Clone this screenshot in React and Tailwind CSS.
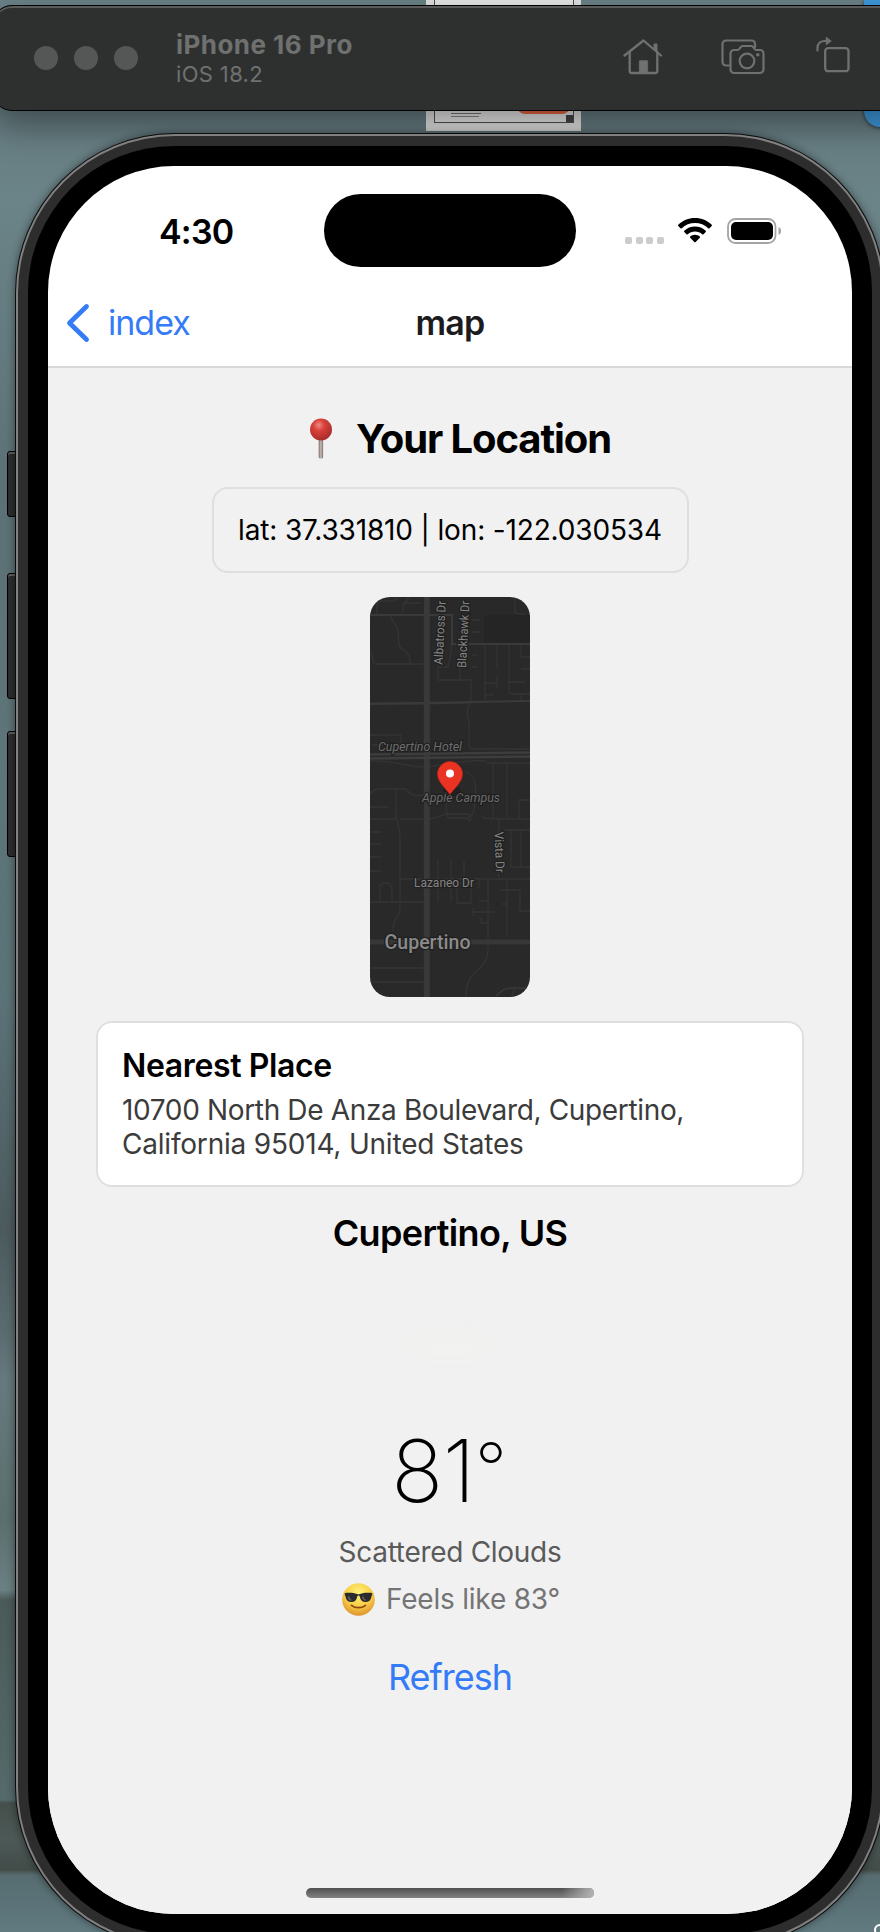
import React from "react";

const HomeIcon = () => (
  <svg width="40" height="38" viewBox="0 0 40 38" fill="none" stroke="#6f7170" strokeWidth="2.3" strokeLinecap="round" strokeLinejoin="round">
    <path d="M1.5 17.5 20.5 2.5 38 17.5" />
    <path d="M6.7 14v19a2 2 0 0 0 2 2h23.6a2 2 0 0 0 2-2V14" />
    <path d="M31 11.500V6h3v8z" fill="#6f7170" strokeWidth="1" />
    <path d="M16.200 35V23.500a1 1 0 0 1 1-1h6.600a1 1 0 0 1 1 1V35z" fill="#6f7170" strokeWidth="0.500" />
  </svg>
);

const CameraIcon = () => (
  <svg width="44" height="36" viewBox="0 0 44 36" fill="none" stroke="#6f7170" strokeWidth="2.200" strokeLinecap="round" strokeLinejoin="round">
    <path d="M8 26.500H5a3.500 3.500 0 0 1-3.500-3.500V5A3.500 3.500 0 0 1 5 1.500h26A3.500 3.500 0 0 1 34 5v3" />
    <path d="M13 11h3.500c1 0 1.600-.5 2.200-1.500l.8-1.200c.6-.9 1.300-1.300 2.300-1.300h8.400c1 0 1.700.4 2.300 1.300l.8 1.200c.6 1 1.200 1.500 2.200 1.500H39a3.500 3.500 0 0 1 3.500 3.500V30.500A3.500 3.500 0 0 1 39 34H13a3.500 3.500 0 0 1-3.500-3.500V14.500A3.500 3.500 0 0 1 13 11z" />
    <circle cx="26" cy="22" r="7.300" />
    <circle cx="36.800" cy="15.700" r="1.800" fill="#6f7170" stroke="none" />
  </svg>
);

const RotateIcon = () => (
  <svg width="34" height="37" viewBox="0 0 34 37" fill="none" stroke="#6f7170" strokeWidth="2.200" strokeLinecap="round">
    <path d="M1.500 14.500V12C1.500 7.500 4.500 5 9 5h2" />
    <path d="M9.800 0.500v9l6-4.500z" fill="#6f7170" stroke="none" />
    <rect x="9.200" y="12.200" width="23.300" height="23" rx="3" strokeWidth="2.300" />
  </svg>
);

const WifiIcon = () => (
  <svg width="34" height="25" viewBox="0 0 34 25">
    <path d="M17 0C10.500 0 4.500 2.500.3 6.700c-.4.4-.4.900 0 1.300l2.200 2.200c.4.4.9.4 1.300 0C7.200 6.800 11.900 4.900 17 4.900s9.800 1.900 13.200 5.300c.4.4.9.4 1.300 0l2.200-2.200c.4-.4.4-.9 0-1.300C29.500 2.500 23.500 0 17 0z" />
    <path d="M17 8.500c-4.100 0-7.900 1.600-10.700 4.200-.4.4-.4.900 0 1.300l2.200 2.200c.4.400.9.400 1.300 0 1.900-1.800 4.400-2.800 7.200-2.800s5.300 1 7.200 2.800c.4.400.9.400 1.300 0l2.200-2.200c.4-.4.4-.9 0-1.300C24.900 10.100 21.100 8.500 17 8.500z" />
    <path d="M17 16.700c-1.900 0-3.600.7-4.800 1.800-.4.400-.4.900 0 1.300l4.100 4.100c.4.400 1 .4 1.400 0l4.100-4.100c.4-.4.4-.9 0-1.300-1.200-1.100-2.900-1.800-4.800-1.800z" />
  </svg>
);

const BatteryIcon = () => (
  <svg width="55" height="26" viewBox="0 0 55 26">
    <rect x="1" y="1" width="47.500" height="24" rx="7.500" fill="none" stroke="#a3a3a3" strokeWidth="1.800" />
    <rect x="4" y="4" width="42" height="18" rx="5" />
    <path d="M51.500 9v8c1.600-.7 2.600-2.200 2.600-4s-1-3.300-2.600-4z" fill="#a3a3a3" />
  </svg>
);

const PushPin = () => (
  <svg width="24" height="42" viewBox="0 0 24 42">
    <defs>
      <radialGradient id="pinHead" cx="0.4" cy="0.3" r="0.75">
        <stop offset="0" stopColor="#ef8a83" />
        <stop offset="0.350" stopColor="#d8403b" />
        <stop offset="1" stopColor="#a32a27" />
      </radialGradient>
      <linearGradient id="pinShaft" x1="0" x2="1" y1="0" y2="0">
        <stop offset="0" stopColor="#7b6a64" />
        <stop offset="0.5" stopColor="#c9beb9" />
        <stop offset="1" stopColor="#7b6a64" />
      </linearGradient>
    </defs>
    <rect x="9.700" y="20" width="4.400" height="20.500" rx="1.500" fill="url(#pinShaft)" />
    <circle cx="12" cy="11.500" r="11" fill="url(#pinHead)" />
  </svg>
);

const CoolFace = () => (
  <svg width="33" height="33" viewBox="0 0 33 33">
    <defs>
      <radialGradient id="face" cx="0.5" cy="0.3" r="0.72">
        <stop offset="0" stopColor="#fff27a" />
        <stop offset="0.550" stopColor="#f9cf49" />
        <stop offset="1" stopColor="#dd8f2e" />
      </radialGradient>
    </defs>
    <circle cx="16.500" cy="16.500" r="16.300" fill="url(#face)" />
    <path d="M2.800 10c4-.6 9-.4 12.200.9.900.3 2.100.3 3 0 3.200-1.300 8.200-1.500 12.200-.9v2.200c-.6.300-.7.900-.8 1.600-.5 3.500-2.500 5.300-5.900 5.300-3.300 0-5-1.800-5.700-5.300-.2-1-.6-1.400-1.300-1.400s-1.100.4-1.300 1.400c-.7 3.500-2.400 5.300-5.700 5.300-3.400 0-5.400-1.800-5.900-5.300-.1-.7-.2-1.300-.8-1.600z" fill="#2b2b2d" />
    <path d="M6.500 13.500c.3 2 1.200 3.300 2.800 3.800M20.800 13.500c.3 2 1.200 3.300 2.800 3.800" stroke="#68686c" strokeWidth="1.500" fill="none" />
    <path d="M9.500 22.300c3.800 3.200 10.200 3.200 14 0" fill="none" stroke="#8a4a13" strokeWidth="1.700" strokeLinecap="round" />
  </svg>
);

const mapLabel = { fontFamily: "Roboto, 'Liberation Sans', sans-serif", paintOrder: "stroke" };

const DarkMap = () => (
  <svg className="h-[400px] w-[160px] rounded-[20px]" viewBox="0 0 160 400">
    <rect width="160" height="400" fill="#292929" />
    <rect x="114" y="18" width="46" height="28" fill="#252525" />
    <g fill="none" stroke="#343434" strokeWidth="1.300">
      <path d="M21 19c0 6 6 8 7 15s-1 15 4 18 8 5 8 15M0 55c4 3 1 12 6 12h48M7 17V8c0-3 2-4 5-4h12l4-4M33 16V8l6-8M34 6h17" />
      <path d="M68 71v12h33v22c-4 6-5 12-2 20v22c0 3 1 5 4 5h57M81 48c2 6-2 14-3 22H68M90 48v34M115 48v56M127 48v24M139 48v46c0 3 2 3 5 3h16M151 48v12h9M151 72h9M139 85h16M115 86h12M127 78v14M115 98h7v-2M151 97v8M102 23h8M102 35h8M102 58h5M102 70h5M145 0v14c0 3 3 3 10 3" />
      <path d="M0 144v-6h31v10H2M0 164c20-2 40 7 56 6s35-8 60-6M0 197c4-6 8-5 20-5h16c5 6 8 8 18 6M26 192v24c0 12 4 10 4 24v57M95 174c12 6 11 14 10 30-1 8 0 14-8 17H78c-4-12 0-20 0-25M97 222c3 3 4 1 4-2M123 166v55M137 166v55M117 166h43M149 221v-18h11" />
      <path d="M0 210h18M0 222h26M30 222h28c10 0 12-5 20-5h22M111 218c2 4 3 4 49 4M0 235h11M0 247h11M0 260h11M0 274h11M30 282h130M129 222v58M134 233h26M141 233v37h19M151 233v37M10 305v-14c0-3 1-5 5-5s7 2 7 5v14M0 305h54M30 297v15c0 10-7 6-7 22M68 263v42M81 263v42M94 263v20M87 286v20h14v-20zM109 283v8M118 283v72c-2 20-22 16-22 45M109 304h8M103 315h22M103 311v8M137 283v56M130 293h20v21h10M137 307h-5M111 320v6h7" />
      <path d="M0 371h54M0 385h54M142 399l3-10" />
    </g>
    <g fill="none" stroke="#3a3a3a" strokeWidth="2">
      <path d="M0 18h82v29h78M0 107l100-2 60-1" />
      <path d="M0 106.500h54l46-1" />
      <path d="M126 399c6-6 10-8 14-8h20" strokeWidth="1.500" />
    </g>
    <path d="M56.800 0v400" stroke="#393939" strokeWidth="6" />
    <path d="M0 345h160" stroke="#373737" strokeWidth="5" />
    <g stroke="#3d3d3d" strokeWidth="2.500">
      <path d="M0 157.500 160 155.500" />
      <path d="M0 161.500 160 159.500" />
    </g>
    <g style={mapLabel} fill="#858585" stroke="#202020" strokeWidth="2.500" fontSize="12.500">
      <text transform="translate(72.500 68) rotate(-87)" textLength="64" lengthAdjust="spacingAndGlyphs">Albatross Dr</text>
      <text transform="translate(96 71) rotate(-87)" textLength="67" lengthAdjust="spacingAndGlyphs">Blackhawk Dr</text>
      <text transform="translate(124.500 235) rotate(88)" textLength="41" lengthAdjust="spacingAndGlyphs">Vista Dr</text>
      <text x="44" y="290" textLength="60" lengthAdjust="spacingAndGlyphs">Lazaneo Dr</text>
      <text x="8" y="154" textLength="84" fontStyle="italic" fill="#6c6c6c" fontSize="13" lengthAdjust="spacingAndGlyphs">Cupertino Hotel</text>
      <text x="52" y="205" textLength="78" fontStyle="italic" fill="#6c6c6c" fontSize="13" lengthAdjust="spacingAndGlyphs">Apple Campus</text>
      <text x="14.500" y="352" textLength="86" fill="#8a8a8a" fontSize="20" fontWeight="500" lengthAdjust="spacingAndGlyphs">Cupertino</text>
    </g>
    <ellipse cx="82" cy="194" rx="9" ry="5" fill="#1c1c1c" opacity="0.6" />
    <path d="M80 197.500C75.500 191 67.500 185 67.500 177a12.500 12.500 0 0 1 25 0c0 8-8 14-12.500 20.500z" fill="#ea3323" stroke="#c92316" strokeWidth="0.600" />
    <circle cx="80" cy="176.500" r="4" fill="#fff" />
  </svg>
);

const Toolbar = () => (
  <header className="relative -ml-2 mt-[5px] flex h-[106px] w-[920px] shrink-0 items-center rounded-l-[20px] border border-black bg-[#2e302f] shadow-[inset_0_2px_0_#5a5c5b,0_14px_36px_rgba(0,0,0,0.4)]">
    <div className="ml-[41px] flex gap-4">
      <span className="size-6 rounded-full bg-[#555756]" />
      <span className="size-6 rounded-full bg-[#555756]" />
      <span className="size-6 rounded-full bg-[#555756]" />
    </div>
    <div className="ml-[38px] w-[447px] text-[#6f7170]">
      <div className="text-[26px] leading-[31px] font-bold tracking-[0.46px]">iPhone 16 Pro</div>
      <div className="text-[22px] leading-[28px] tracking-[0.35px]">iOS 18.2</div>
    </div>
    <div className="flex items-center pb-0.5">
      <HomeIcon />
      <div className="ml-[58px]"><CameraIcon /></div>
      <div className="-mt-1.5 ml-[51px]"><RotateIcon /></div>
    </div>
  </header>
);

const StatusBar = () => (
  <div className="flex h-[117px] items-start pt-[28px]">
    <div className="mt-[17px] ml-[111px] w-[165px] text-[34px] leading-[42px] font-semibold tracking-[-0.8px]">4:30</div>
    <div className="h-[73px] w-[252px] shrink-0 rounded-full bg-black" />
    <div className="mt-6 ml-[49px] flex items-start">
      <div className="mt-[19px] flex gap-[3.7px]">
        <span className="size-[7px] rounded-[2px] bg-[#cccccc]" />
        <span className="size-[7px] rounded-[2px] bg-[#cccccc]" />
        <span className="size-[7px] rounded-[2px] bg-[#cccccc]" />
        <span className="size-[7px] rounded-[2px] bg-[#cccccc]" />
      </div>
      <div className="ml-[14px]"><WifiIcon /></div>
      <div className="ml-[15px]"><BatteryIcon /></div>
    </div>
  </div>
);

const NavBar = () => (
  <div className="grid h-[85px] grid-cols-3 items-center border-b-2 border-[#d8d8d8] pb-1 text-[34px] leading-[42px]">
    <div className="flex items-center text-[#347cf7]">
      <svg className="ml-[18px]" width="24" height="40" viewBox="0 0 24 40" fill="none" stroke="currentColor" strokeWidth="4.800" strokeLinecap="round" strokeLinejoin="round">
        <path d="M20.500 3.500 3.500 20l17 16.500" />
      </svg>
      <span className="ml-[18px] tracking-[-1px]">index</span>
    </div>
    <div className="text-center font-semibold tracking-[-0.8px] text-[#1c1c1e]">map</div>
  </div>
);

const Content = () => (
  <main className="flex flex-1 flex-col items-center bg-[#f1f1f1] pt-[47px]">
    <h1 className="flex items-center pl-5 text-[40px] leading-[48px] font-bold">
      <PushPin />
      <span className="ml-[23px] tracking-[-1.1px]">Your Location</span>
    </h1>
    <div className="mt-6 flex h-[86px] w-[477px] items-center justify-center rounded-2xl border-2 border-[#dfdfdf] text-[28px] tracking-[-0.15px] whitespace-nowrap">
      lat: 37.331810 | lon: -122.030534
    </div>
    <div className="mt-6"><DarkMap /></div>
    <section className="mt-6 h-[166px] w-[708px] rounded-2xl border-2 border-[#dfdfdf] bg-white px-6 pt-6">
      <h2 className="text-[32px] leading-[38px] font-semibold tracking-[-0.38px]">Nearest Place</h2>
      <p className="mt-[8px] w-[600px] text-[28px] leading-[34px] text-[#3b3b3b]">
        <span className="tracking-[-0.35px]">10700 North De Anza Boulevard, Cupertino,</span>
        <br />
        <span className="tracking-[-0.2px]">California 95014, United States</span>
      </p>
    </section>
    <h2 className="mt-6 text-[36px] leading-[44px] font-semibold tracking-[-0.66px]">Cupertino, US</h2>
    <div className="mt-[45px] flex h-[90px] items-center">
      <span className="h-6 w-20 rounded-full bg-[#f1f1ef] blur-[6px]" />
    </div>
    <div className="mt-[31px] mr-0.5 flex text-[86px] leading-[100px] font-extralight">
      <span className="tracking-[-0.5px]">81</span>
      <span className="mt-[2px] text-[70px] leading-[90px]">°</span>
    </div>
    <div className="mt-[14px] text-[28px] leading-[34px] tracking-[-0.3px] text-[#5a5a5a]">Scattered Clouds</div>
    <div className="mt-[13px] flex items-center pl-0.5 text-[28px] leading-[34px] text-[#747474]">
      <CoolFace />
      <span className="ml-[11px] tracking-[-0.2px]">Feels like 83°</span>
    </div>
    <button className="mt-[39px] text-[36px] leading-[44px] tracking-[-1px] text-[#347cf7]">Refresh</button>
    <div className="mt-auto mb-4 h-[10px] w-[288px] overflow-hidden rounded-full bg-linear-to-b from-[#4f504f] to-[#828282]">
      <div className="ml-auto h-full w-8 bg-linear-to-r from-transparent to-[#b4b4b4]" />
    </div>
  </main>
);

const Phone = () => (
  <div className="relative mt-[22px] ml-[15px] h-[1814px] w-[870px] shrink-0">
    <span className="absolute top-[318px] -left-2 h-[66px] w-3 rounded-l-[3px] border border-black bg-[#2d2d2d] shadow-[inset_0_2px_0_#5f5f5f]" />
    <span className="absolute top-[440px] -left-2 h-[126px] w-3 rounded-l-[3px] border border-black bg-[#2d2d2d] shadow-[inset_0_2px_0_#5f5f5f]" />
    <span className="absolute top-[598px] -left-2 h-[126px] w-3 rounded-l-[3px] border border-black bg-[#2d2d2d] shadow-[inset_0_2px_0_#5f5f5f]" />
    <div className="relative h-full rounded-[160px] bg-[#0b0b0b] p-px shadow-[0_0_8px_rgba(0,0,0,0.45)]">
      <div className="h-full rounded-[159px] bg-[#808080] p-[2px]">
        <div className="h-full rounded-[157px] bg-[#2d2d2d] p-[10px]">
          <div className="h-full rounded-[146px] bg-black p-5">
            <div className="flex h-[1748px] flex-col overflow-hidden rounded-[126px] bg-white text-black">
              <StatusBar />
              <NavBar />
              <Content />
            </div>
          </div>
        </div>
      </div>
    </div>
  </div>
);

const Desktop = () => (
  <div className="absolute inset-0 bg-[linear-gradient(180deg,#6b8489_0px,#64797e_80px,#6b8488_200px,#5c7175_480px,#5d7478_760px,#5b7277_1000px,#4c5a5d_1230px,#5a6b6f_1330px,#66797d_1380px,#5b6f6e_1520px,#6b8083_1590px,#4b5a59_1600px,#556a6b_1800px,#454f4b_1803px,#4c5957_1840px,#424c49_1870px,#566c70_1875px,#607a80_1932px)]">
    <div className="absolute top-0 left-[426px] h-[131px] w-[155px] bg-[#e4e4e4]">
      <div className="absolute -top-2 left-2 h-[131px] w-[140px] border border-[#4b5153] bg-[#e9e9e9]">
        <div className="absolute top-[117px] left-4 flex flex-col gap-[2px]">
          <span className="h-px w-6 bg-[#888]" />
          <span className="h-px w-[30px] bg-[#777]" />
          <span className="h-px w-7 bg-[#888]" />
        </div>
        <span className="absolute right-[3px] bottom-2 h-6 w-[53px] rounded-lg bg-[#e8683f]" />
        <span className="absolute right-0 bottom-0 size-[7px] bg-[#444]" />
      </div>
    </div>
    <div className="absolute top-0 left-[864px] h-[127px] w-10 rounded-bl-[16px] bg-[#3f9be0] shadow-[0_1px_4px_rgba(0,0,0,0.6)]" />
    <div className="absolute top-[1924px] left-[874px] size-3 rounded-full border-2 border-white" />
  </div>
);

export default function App() {
  return (
    <div className="relative flex h-[1932px] w-[880px] flex-col overflow-hidden bg-[#5d7478] font-[Inter,'Liberation_Sans',sans-serif]">
      <Desktop />
      <Toolbar />
      <Phone />
    </div>
  );
}
